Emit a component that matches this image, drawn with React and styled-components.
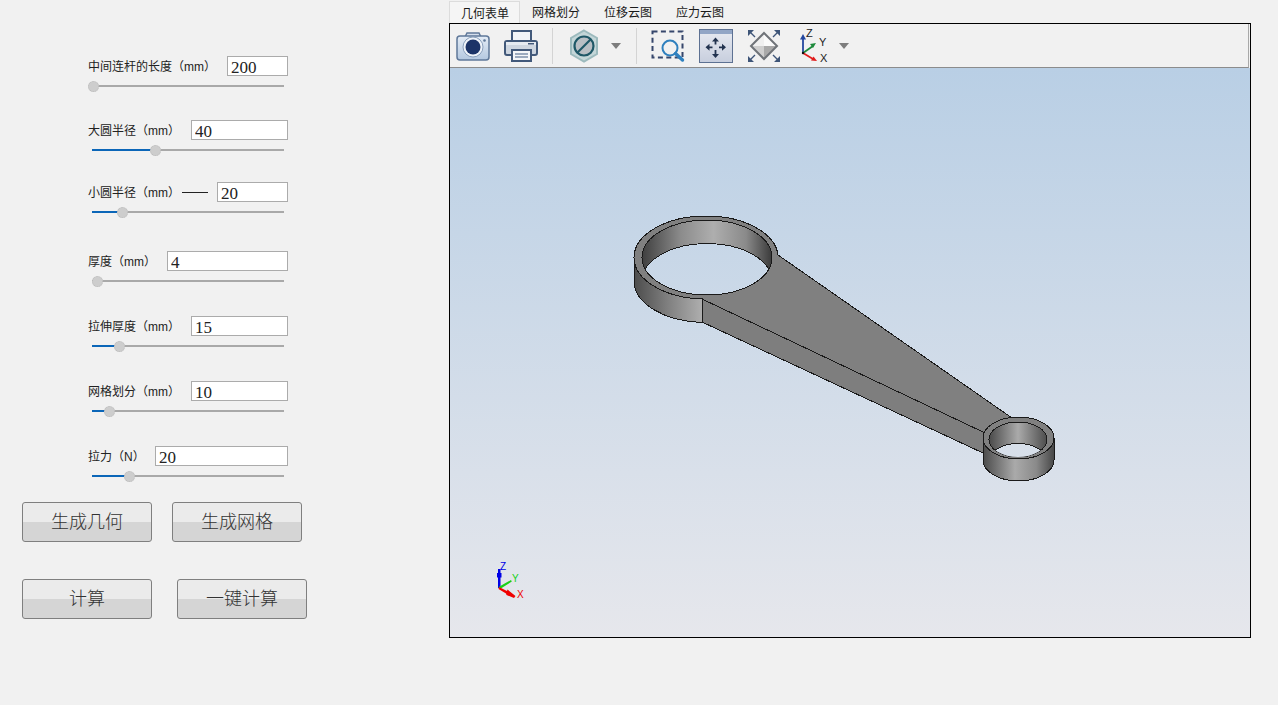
import React from 'react';
import styled, { createGlobalStyle } from 'styled-components';

const GlobalStyle = createGlobalStyle`
    html, body {
        margin: 0;
        padding: 0;
        background: #f1f1f1;
        overflow: hidden;
    }
    * {
        box-sizing: border-box;
    }
`;

const Page = styled.div`
    display: flex;
    width: 1278px;
    height: 705px;
    background: #f1f1f1;
    font-family: 'Liberation Sans', 'Noto Sans CJK SC', sans-serif;
    color: #222;
`;

const LeftPanel = styled.div`
    width: 449px;
    flex: none;
    padding-left: 22px;
`;

const Params = styled.div`
    width: 266px;
    padding-left: 66px;
`;

const ParamGroup = styled.div`
    margin-top: ${p => p.$top}px;
`;

const ParamRow = styled.div`
    display: flex;
    align-items: center;
    height: 20px;
`;

const Label = styled.label`
    font-size: 12px;
    line-height: 20px;
    padding-top: 1px;
    white-space: nowrap;
    margin-right: auto;
`;

const Dash = styled.span`
    width: 26px;
    height: 1px;
    margin: 1px 9px 0 0;
    background: #222;
`;

const ValueInput = styled.input`
    width: ${p => p.$width}px;
    height: 20px;
    padding: 3px 3px 0;
    border: 1px solid #ababab;
    background: #fff;
    font-family: 'Liberation Serif', serif;
    font-size: 17px;
    color: #222;
    outline: none;
`;

const Track = styled.div`
    position: relative;
    width: 192px;
    height: 2px;
    margin: 9px 0 0 4px;
    background: #a9a9a9;
`;

const TrackFill = styled.div`
    height: 2px;
    background: #0b66b8;
`;

const Thumb = styled.span`
    position: absolute;
    top: -4px;
    width: 11px;
    height: 11px;
    border-radius: 50%;
    background: #cdcdcd;
    border: 1px dotted #bbb;
    transform: translateX(-5px);
`;

const ButtonRow = styled.div`
    display: flex;
    gap: ${p => p.$gap}px;
    margin-top: ${p => p.$top}px;
`;

const ActionButton = styled.button`
    width: 130px;
    height: 40px;
    padding: 0 0 4px;
    border: 1px solid #7f7f7f;
    border-radius: 3px;
    background: linear-gradient(to bottom, #ebebeb 0, #ebebeb 50%, #d5d5d5 50%, #d5d5d5 100%);
    font-family: 'Noto Sans CJK SC', sans-serif;
    font-size: 18px;
    font-weight: 300;
    color: #333;
`;

const RightPanel = styled.div`
    width: 802px;
    flex: none;
    display: flex;
    flex-direction: column;
`;

const Tabs = styled.div`
    display: flex;
    height: 23px;
    padding-top: 1px;
`;

const Tab = styled.div`
    width: ${p => (p.$active ? 71 : 72)}px;
    height: 22px;
    padding-left: ${p => (p.$active ? 11 : 12)}px;
    font-size: 12px;
    line-height: 24px;
    color: #1a1a1a;
    background: ${p => (p.$active ? '#f5f5f5' : 'transparent')};
    border: 1px solid ${p => (p.$active ? '#dcdcdc' : 'transparent')};
    border-width: ${p => (p.$active ? '1px 1px 0 1px' : '0')};
`;

const Viewer = styled.div`
    height: 615px;
    border: 1px solid #000;
    display: flex;
    flex-direction: column;
`;

const Toolbar = styled.div`
    display: flex;
    align-items: center;
    gap: 14px;
    height: 44px;
    padding-left: 6px;
    margin-right: 1px;
    background: #f1f1f1;
    border-bottom: 1px solid #8c8c8c;
    border-right: 1px solid #a8a8a8;
`;

const ToolIcon = styled.svg`
    width: 34px;
    height: 34px;
    flex: none;
    overflow: visible;
`;

const ToolCaret = styled.span`
    width: 0;
    height: 0;
    flex: none;
    margin-left: -4px;
    margin-right: ${p => p.$end || 0}px;
    border-left: 5.5px solid transparent;
    border-right: 5.5px solid transparent;
    border-top: 6px solid #7d7d7d;
`;

const ToolSeparator = styled.span`
    width: 1px;
    height: 36px;
    flex: none;
    background: #d4d4d4;
`;

const Canvas = styled.div`
    flex: 1;
    background: linear-gradient(to bottom, #b9cfe5 0%, #e6e7ec 100%);
`;

const Scene = styled.svg`
    display: block;
    width: 800px;
    height: 569px;
`;

const params = [
    { label: '中间连杆的长度（mm）', value: '200', top: 56, width: 61, thumb: 1, fill: false },
    { label: '大圆半径（mm）', value: '40', top: 33, width: 97, thumb: 63, fill: true },
    { label: '小圆半径（mm）', value: '20', top: 31, width: 71, thumb: 30, fill: true, dash: true },
    { label: '厚度（mm）', value: '4', top: 38, width: 121, thumb: 5, fill: false },
    { label: '拉伸厚度（mm）', value: '15', top: 34, width: 97, thumb: 27, fill: true },
    { label: '网格划分（mm）', value: '10', top: 34, width: 97, thumb: 17, fill: true },
    { label: '拉力（N）', value: '20', top: 34, width: 133, thumb: 37, fill: true },
];

const CameraIcon = () => (
    <ToolIcon viewBox="0 0 34 34">
        <defs>
            <linearGradient id="camBody" x1="0" y1="0" x2="0" y2="1">
                <stop offset="0" stopColor="#e4ecf6" />
                <stop offset="1" stopColor="#b4c8e0" />
            </linearGradient>
        </defs>
        <path d="M9 8l2-4h12l2 4" fill="#d5dfec" stroke="#5f7899" strokeWidth="1.5" />
        <rect x="1" y="7" width="32" height="24" rx="3" fill="url(#camBody)" stroke="#5f7899" strokeWidth="1.5" />
        <circle cx="17" cy="18" r="10" fill="#eef3f9" stroke="#8aa0bc" />
        <circle cx="17" cy="18" r="7.5" fill="#1c3468" />
        <circle cx="28.5" cy="11.5" r="1.3" fill="#5f7899" />
    </ToolIcon>
);

const PrinterIcon = () => (
    <ToolIcon viewBox="0 0 34 34">
        <rect x="8" y="2" width="19" height="12" fill="#f2f4f7" stroke="#42597a" strokeWidth="2" />
        <path d="M3 12h28a2 2 0 0 1 2 2v10a2 2 0 0 1-2 2H3a2 2 0 0 1-2-2V14a2 2 0 0 1 2-2z" fill="#ced6e0" stroke="#42597a" strokeWidth="2" />
        <rect x="2" y="13" width="30" height="3" fill="#e6ebf1" />
        <rect x="24" y="14" width="6" height="1.5" fill="#42597a" />
        <rect x="8" y="21" width="19" height="11" fill="#f4f6f8" stroke="#42597a" strokeWidth="2" />
        <path d="M11 25h13M11 28h13" stroke="#7d91ab" strokeWidth="1.4" />
    </ToolIcon>
);

const HexIcon = () => (
    <ToolIcon viewBox="0 0 34 34">
        <path d="M17 1.500l13 7.500v16l-13 7.500-13-7.500V9z" fill="#c4d6d8" stroke="#9cbabd" strokeWidth="2" />
        <circle cx="17" cy="17" r="9.500" fill="#b9bfc4" stroke="#1f5867" strokeWidth="2.200" />
        <path d="M10 24L24 10" stroke="#1f5867" strokeWidth="2.200" />
    </ToolIcon>
);

const ZoomBoxIcon = () => (
    <ToolIcon viewBox="0 0 34 34">
        <rect x="1.500" y="2.500" width="30" height="26" fill="none" stroke="#36476c" strokeWidth="2" strokeDasharray="5 3.400" />
        <circle cx="19" cy="19" r="7.500" fill="#f1f1f1" stroke="#2f80be" strokeWidth="2" />
        <path d="M24.500 24.500L31.500 31" stroke="#2f80be" strokeWidth="3.400" strokeLinecap="round" />
    </ToolIcon>
);

const PanIcon = () => (
    <ToolIcon viewBox="0 0 34 34">
        <defs>
            <linearGradient id="panBody" x1="0" y1="0" x2="0" y2="1">
                <stop offset="0" stopColor="#e8ebf2" />
                <stop offset="1" stopColor="#c7cedd" />
            </linearGradient>
        </defs>
        <rect x="0.500" y="0.500" width="33" height="33" fill="url(#panBody)" stroke="#5d7192" />
        <rect x="1" y="1" width="32" height="4" fill="#92a6c6" />
        <path d="M16.500 12v3.500M16.500 21v4.500M10 18.300h3.500M20 18.300h3.500" stroke="#22334f" strokeWidth="1.800" />
        <path d="M16.500 8.500l-3.500 4h7zM16.500 29l-3.500-4h7zM6.500 18.300l4-3.500v7zM27 18.300l-4-3.500v7z" fill="#22334f" />
    </ToolIcon>
);

const DiamondIcon = () => (
    <ToolIcon viewBox="0 0 34 34">
        <path d="M17 4L4 17h13z" fill="#f0f0f0" />
        <path d="M17 4l13 13H17z" fill="#fafafa" />
        <path d="M4 17l13 13V17z" fill="#cfcfcf" />
        <path d="M30 17L17 30V17z" fill="#a9a9a9" />
        <path d="M17 4l13 13-13 13L4 17z" fill="none" stroke="#6f7378" strokeWidth="2" />
        <path d="M1 1h6L1 7zM33 1h-6l6 6zM1 33h6l-6-6zM33 33h-6l6-6z" fill="#3e5578" />
        <path d="M3 3l5 5M31 3l-5 5M3 31l5-5M31 31l-5-5" stroke="#3e5578" strokeWidth="1.400" />
    </ToolIcon>
);

const AxesIcon = () => (
    <ToolIcon viewBox="0 0 34 34">
        <path d="M8 24V9" stroke="#24479f" strokeWidth="1.800" />
        <path d="M8 5l-3 5.500h6z" fill="#24479f" />
        <path d="M8 24l10-7" stroke="#1d8a3c" strokeWidth="1.800" />
        <path d="M21 14l-6 1 3 4z" fill="#1d8a3c" />
        <path d="M8 24l10 6" stroke="#e11d1d" strokeWidth="1.800" />
        <path d="M22 32l-6-.5 2.500-4z" fill="#e11d1d" />
        <circle cx="8" cy="24" r="1.200" fill="#111" />
        <text x="11" y="8" fontFamily="Liberation Sans" fontSize="11" fill="#222">Z</text>
        <text x="24" y="17" fontFamily="Liberation Sans" fontSize="11" fill="#222">Y</text>
        <text x="25" y="33" fontFamily="Liberation Sans" fontSize="11" fill="#222">X</text>
    </ToolIcon>
);

const ConnectingRod = () => (
    <Scene viewBox="450 68 800 569">
        <defs>
            <linearGradient id="backdrop" gradientUnits="userSpaceOnUse" x1="0" y1="68" x2="0" y2="637">
                <stop offset="0" stopColor="#b9cfe5" />
                <stop offset="1" stopColor="#e6e7ec" />
            </linearGradient>
            <linearGradient id="bigOuter" gradientUnits="userSpaceOnUse" x1="634" y1="0" x2="705" y2="0">
                <stop offset="0" stopColor="#4c4c4c" />
                <stop offset="0.45" stopColor="#7d7d7d" />
                <stop offset="1" stopColor="#b2b2b2" />
            </linearGradient>
            <linearGradient id="bigInner" gradientUnits="userSpaceOnUse" x1="642" y1="0" x2="772" y2="0">
                <stop offset="0" stopColor="#3f3f3f" />
                <stop offset="0.3" stopColor="#8c8c8c" />
                <stop offset="0.55" stopColor="#aeaeae" />
                <stop offset="0.8" stopColor="#8a8a8a" />
                <stop offset="1" stopColor="#3a3a3a" />
            </linearGradient>
            <linearGradient id="smallOuter" gradientUnits="userSpaceOnUse" x1="983" y1="0" x2="1054" y2="0">
                <stop offset="0" stopColor="#4a4a4a" />
                <stop offset="0.45" stopColor="#aaaaaa" />
                <stop offset="0.75" stopColor="#8a8a8a" />
                <stop offset="1" stopColor="#484848" />
            </linearGradient>
            <linearGradient id="smallInner" gradientUnits="userSpaceOnUse" x1="989" y1="0" x2="1047" y2="0">
                <stop offset="0" stopColor="#4a4a4a" />
                <stop offset="0.5" stopColor="#aaaaaa" />
                <stop offset="1" stopColor="#4c4c4c" />
            </linearGradient>
            <clipPath id="bigHole">
                <ellipse cx="707" cy="257.5" rx="65" ry="37.5" />
            </clipPath>
            <clipPath id="smallHole">
                <ellipse cx="1018" cy="439.5" rx="29" ry="17.5" />
            </clipPath>
        </defs>

        <g shapeRendering="crispEdges" stroke="#1a1a1a" strokeWidth="1">
            {/* big end, outer wall */}
            <path d="M634 257V281A72 41.5 0 0 0 702 322.5V299L660 280z" fill="url(#bigOuter)" />
            <ellipse cx="706" cy="257.5" rx="72" ry="41.5" fill="#808080" />

            {/* arm */}
            <path d="M778 255L1012 418L1000 440L983 432L702 299L705 296z" fill="#808080" stroke="none" />
            <path d="M778 255L1012 418" fill="none" />
            <path d="M702 299L983 432V453L702 322z" fill="#7e7e7e" />

            {/* big end, hole */}
            <ellipse cx="707" cy="257.5" rx="65" ry="37.5" fill="url(#bigInner)" />
            <ellipse cx="707" cy="281" rx="65" ry="37.5" clipPath="url(#bigHole)" fill="url(#backdrop)" />
            <path d="M642 257.5A65 37.5 0 0 0 772 257.5" fill="none" />

            {/* small end */}
            <path d="M983 438V460A35.5 21 0 0 0 1054 460V438z" fill="url(#smallOuter)" />
            <ellipse cx="1018.5" cy="438" rx="35.5" ry="21" fill="#808080" />
            <ellipse cx="1018" cy="439.5" rx="29" ry="17.5" fill="url(#smallInner)" />
            <ellipse cx="1018" cy="461" rx="29" ry="17.5" clipPath="url(#smallHole)" fill="url(#backdrop)" />
        </g>

        {/* orientation triad */}
        <path d="M498 588V569h2.500V588z" fill="#0000e6" />
        <path d="M497 573h4.500v4.500h-4.500z" fill="#0000e6" />
        <path d="M498.500 587l12.500-7 .8 1.600L500 589z" fill="#18d018" />
        <path d="M499 587l8 4 .5-1.500 8 6.500-1.500 2-7.500-3-.5-1.500-7.500-4.500z" fill="#f00000" />
        <g fontFamily="Liberation Sans" fontSize="10">
            <text x="500" y="570" fill="#0000e6">Z</text>
            <text x="512" y="582" fill="#18d018">Y</text>
            <text x="517" y="598" fill="#f00000">X</text>
        </g>
    </Scene>
);

const App = () => (
    <Page>
        <GlobalStyle />
        <LeftPanel>
            <Params>
                {params.map(p => (
                    <ParamGroup key={p.label} $top={p.top}>
                        <ParamRow>
                            <Label>{p.label}</Label>
                            {p.dash && <Dash />}
                            <ValueInput $width={p.width} defaultValue={p.value} />
                        </ParamRow>
                        <Track>
                            {p.fill && <TrackFill style={{ width: p.thumb }} />}
                            <Thumb style={{ left: p.thumb }} />
                        </Track>
                    </ParamGroup>
                ))}
            </Params>
            <ButtonRow $gap={20} $top={25}>
                <ActionButton>生成几何</ActionButton>
                <ActionButton>生成网格</ActionButton>
            </ButtonRow>
            <ButtonRow $gap={25} $top={37}>
                <ActionButton>计算</ActionButton>
                <ActionButton>一键计算</ActionButton>
            </ButtonRow>
        </LeftPanel>
        <RightPanel>
            <Tabs>
                <Tab $active>几何表单</Tab>
                <Tab>网格划分</Tab>
                <Tab>位移云图</Tab>
                <Tab>应力云图</Tab>
            </Tabs>
            <Viewer>
                <Toolbar>
                    <CameraIcon />
                    <PrinterIcon />
                    <ToolSeparator />
                    <HexIcon />
                    <ToolCaret $end={1} />
                    <ToolSeparator />
                    <ZoomBoxIcon />
                    <PanIcon />
                    <DiamondIcon />
                    <AxesIcon />
                    <ToolCaret />
                </Toolbar>
                <Canvas>
                    <ConnectingRod />
                </Canvas>
            </Viewer>
        </RightPanel>
    </Page>
);

export default App;
